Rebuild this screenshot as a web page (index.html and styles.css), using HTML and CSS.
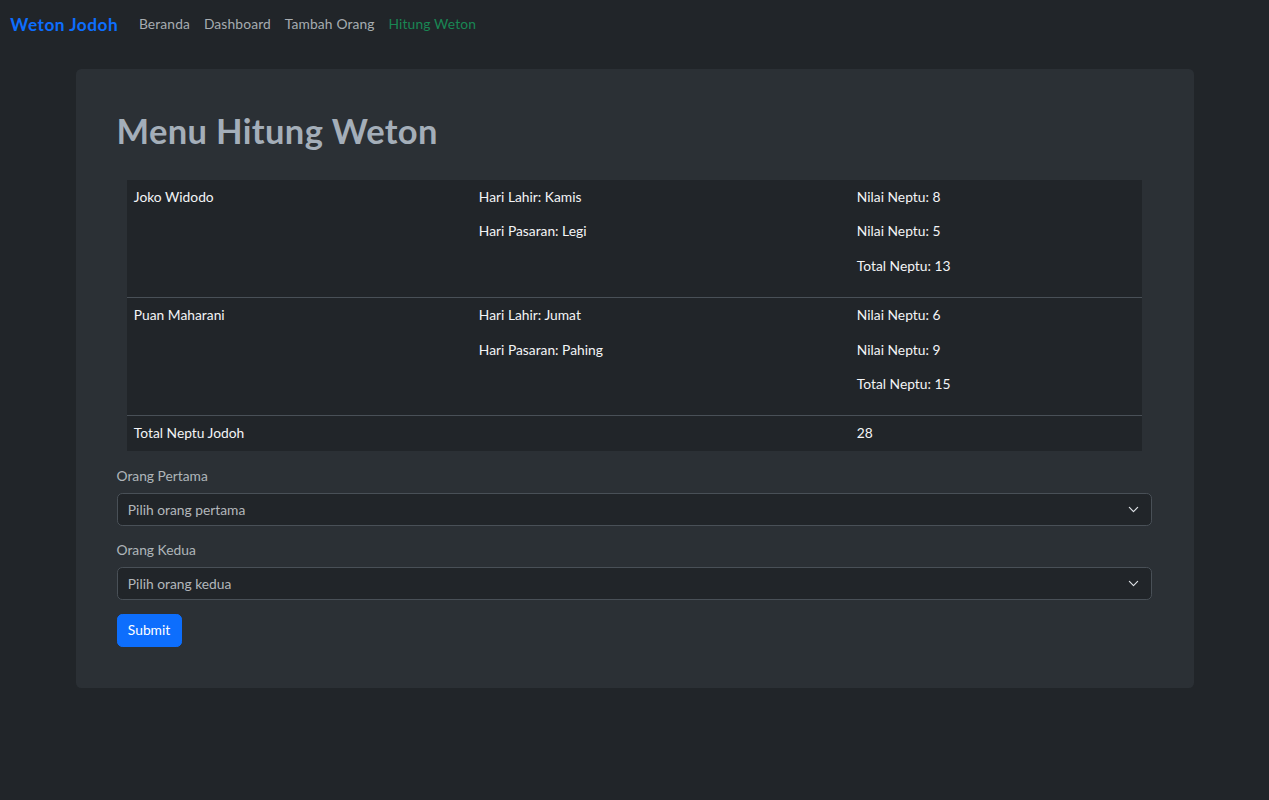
FILE: index.html
```html
<!DOCTYPE html>
<html lang="id">
<head>
<meta charset="utf-8">
<title>Weton Jodoh</title>
<link rel="stylesheet" href="styles.css">
</head>
<body>
<nav class="navbar">
  <a class="brand" href="#">Weton Jodoh</a>
  <ul class="nav">
    <li><a class="nav-link" href="#">Beranda</a></li>
    <li><a class="nav-link" href="#">Dashboard</a></li>
    <li><a class="nav-link" href="#">Tambah Orang</a></li>
    <li><a class="nav-link active" href="#">Hitung Weton</a></li>
  </ul>
</nav>
<main class="container">
  <section class="card">
    <h1 class="title">Menu Hitung Weton</h1>
    <div class="table-wrap">
      <table class="table">
        <colgroup>
          <col class="c1"><col class="c2"><col class="c3">
        </colgroup>
        <tbody>
          <tr>
            <td><p>Joko Widodo</p></td>
            <td><p>Hari Lahir: Kamis</p><p>Hari Pasaran: Legi</p></td>
            <td><p>Nilai Neptu: 8</p><p>Nilai Neptu: 5</p><p>Total Neptu: 13</p></td>
          </tr>
          <tr>
            <td><p>Puan Maharani</p></td>
            <td><p>Hari Lahir: Jumat</p><p>Hari Pasaran: Pahing</p></td>
            <td><p>Nilai Neptu: 6</p><p>Nilai Neptu: 9</p><p>Total Neptu: 15</p></td>
          </tr>
          <tr>
            <td>Total Neptu Jodoh</td>
            <td></td>
            <td>28</td>
          </tr>
        </tbody>
      </table>
    </div>
    <form class="form">
      <div class="field">
        <label class="label" for="p1">Orang Pertama</label>
        <div class="select-wrap">
          <select id="p1" class="select"><option>Pilih orang pertama</option></select>
          <svg class="chev" viewBox="0 0 16 16"><path d="M2 5l6 6 6-6" fill="none" stroke="#dee2e6" stroke-width="2" stroke-linecap="round" stroke-linejoin="round"/></svg>
        </div>
      </div>
      <div class="field">
        <label class="label" for="p2">Orang Kedua</label>
        <div class="select-wrap">
          <select id="p2" class="select"><option>Pilih orang kedua</option></select>
          <svg class="chev" viewBox="0 0 16 16"><path d="M2 5l6 6 6-6" fill="none" stroke="#dee2e6" stroke-width="2" stroke-linecap="round" stroke-linejoin="round"/></svg>
        </div>
      </div>
      <button type="button" class="btn">Submit</button>
    </form>
  </section>
</main>
</body>
</html>
```
FILE: styles.css
```css
html { font-size: 13.8px; }
* { box-sizing: border-box; }
body {
  margin: 0;
  background: #212529;
  color: #dee2e6;
  font-family: "Lato", "Open Sans", sans-serif;
  font-size: 1rem;
  line-height: 1.5;
  min-height: 800px;
}
a { text-decoration: none; }

.navbar {
  display: flex;
  align-items: center;
  height: 48.3px;
  padding: 1px 10.35px 0;
}
.brand {
  color: #0d6efd;
  font-weight: 700;
  font-size: 1.25rem;
  line-height: 1.5;
  letter-spacing: 0.5px;
  margin-right: 1rem;
}
.nav {
  display: flex;
  list-style: none;
  margin: 0;
  padding: 0;
}
.nav-link {
  display: block;
  padding: 0.5rem;
  color: rgba(222, 226, 230, 0.72);
  letter-spacing: 0.15px;
}
.nav-link.active { color: #198754; }

.container {
  width: 1118px;
  margin: 20.7px auto 0;
}
.card {
  background: #2b3035;
  border-radius: 5.2px;
  padding: 3rem 3rem 3rem 41px;
}
.title {
  margin: 0 0 28.2px;
  font-size: 34.5px;
  font-weight: 700;
  line-height: 1.2;
  letter-spacing: 0.35px;
  color: #a4aeb9;
}
.table-wrap { padding: 0 10.35px; }
.table {
  width: 100%;
  border-collapse: collapse;
  background: #212529;
  color: #f3f4f6;
  margin-bottom: 14.8px;
}
.c1 { width: 345px; }
.c2 { width: 378px; }
.table td {
  padding: 0.5rem 0.5rem 0.5rem 7px;
  vertical-align: top;
  border-bottom: 1px solid #495057;
}
.table tr:last-child td { border-bottom: 0; }
.table p { margin: 0 0 1rem; }

.field { margin-bottom: 1rem; }
.label {
  display: block;
  margin-bottom: 0.5rem;
  color: rgba(222, 226, 230, 0.75);
}
.select-wrap { position: relative; }
.select {
  display: block;
  width: 100%;
  height: 32.8px;
  appearance: none;
  -webkit-appearance: none;
  background: #212529;
  color: #b3b7bb;
  border: 1px solid #495057;
  border-radius: 5.2px;
  padding: 0 2.25rem 0 0.75rem;
  font-family: inherit;
  font-size: 1rem;
}
.chev {
  position: absolute;
  right: 13px;
  top: 10.5px;
  width: 11px;
  height: 11px;
  pointer-events: none;
}
.chev path { stroke-width: 1.7; }
.btn {
  display: inline-block;
  background: #0d6efd;
  color: #fff;
  border: 1px solid #0d6efd;
  border-radius: 5.2px;
  padding: 0.375rem 0.75rem;
  font-family: inherit;
  font-size: 1rem;
  line-height: 1.5;
}
```
